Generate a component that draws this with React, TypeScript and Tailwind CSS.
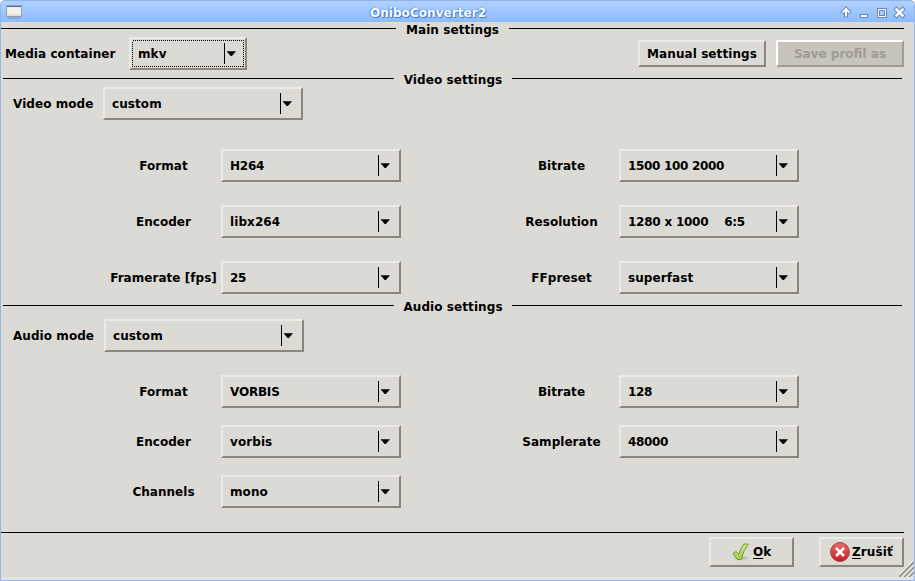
import React from "react";

const bevel = "border-2 border-t-[#ecebe8] border-l-[#ecebe8] border-r-[#8c857b] border-b-[#8c857b]";

function Combo({ value, width, focused = false, tracking = "tracking-[0.08px]" }: { value: string; width: string; focused?: boolean; tracking?: string }) {
  return (
    <div className={`flex h-[33px] shrink-0 ${width} ${bevel} ${focused ? "p-px" : ""}`}>
      <div className={`relative flex min-w-0 flex-1 items-center ${focused ? "pl-[6px] pr-[8px]" : "pl-[7px] pr-[9px]"}`}>
        {focused && (
          <svg className="absolute inset-0 h-full w-full" shapeRendering="crispEdges">
            <rect x="0.5" y="0.5" width="111" height="26" fill="none" stroke="#000" strokeDasharray="1 1" />
          </svg>
        )}
        <span className={`flex-1 whitespace-pre ${tracking}`}>{value}</span>
        <div className="h-[21px] w-px bg-black" />
        <svg className="ml-px h-[6px] w-[10px]" viewBox="0 0 10 6">
          <path d="M.5 .2H10L5.9 5H4.700Z" />
        </svg>
      </div>
    </div>
  );
}

function Section({ title, wide = false, left, right }: { title: string; wide?: boolean; left: string; right: string }) {
  return (
    <div className={`flex h-[17px] ${wide ? "pr-[10px]" : "pl-[2px] pr-3"}`}>
      <div className={`mt-[7px] h-px bg-black ${left}`} />
      <div className="flex-1 text-center leading-[18px] tracking-[0.08px]">{title}</div>
      <div className={`mt-[7px] h-px bg-black ${right}`} />
    </div>
  );
}

function Field({ label, value, tracking }: { label: string; value: string; tracking?: string }) {
  return (
    <div className="flex w-[295px] items-center">
      <div className="w-[115px] whitespace-nowrap text-center tracking-[0.04px]">{label}</div>
      <Combo value={value} width="w-[180px]" tracking={tracking} />
    </div>
  );
}

function FieldRow({ children, className }: { children: React.ReactNode; className: string }) {
  return <div className={`flex h-[33px] gap-[103px] pl-[105px] ${className}`}>{children}</div>;
}

function TitleBar() {
  return (
    <div className="flex h-[22px] items-center rounded-t-[5px] border-x border-t border-[#8fb4e7] bg-linear-to-b from-[#b1d1ff] to-[#8dbbff] pr-[8px] pl-[5px] text-white">
      <svg width="16" height="14" viewBox="0 0 16 14">
        <ellipse cx="8" cy="12.7" rx="7" ry="1.2" fill="#6f94bf" opacity=".6" />
        <rect x=".5" y=".5" width="15" height="11" fill="#f1f1ea" stroke="#92a1ad" />
        <path d="M1 1h14v1H1z" fill="#3979c9" />
        <path d="M1 9h14v2H1z" fill="#dedfd7" />
      </svg>
      <div className="flex-1 pt-[2px] pr-[6px] text-center tracking-[0.06px] [text-shadow:0_0_1px_#3978d0,1px_1px_1px_#3978d0,-1px_0_1px_#5f98e5]">OniboConverter2</div>
      <svg width="66" height="14" viewBox="0 0 66 14">
        <g fill="none" stroke="#6688b8" strokeWidth="4">
          <path d="M6 12.500V4M2 8L6 4l4 4" />
          <path d="M56.500 4.500l6 6M62.500 4.500l-6 6" strokeWidth="4.500" strokeLinecap="square" />
        </g>
        <g fill="none" stroke="#fff" strokeWidth="2">
          <path d="M6 11.500V4M2.500 7.500L6 4l3.500 3.500" />
          <path d="M56.500 4.500l6 6M62.500 4.500l-6 6" strokeWidth="2.500" strokeLinecap="square" />
        </g>
        <rect x="20.5" y="9.5" width="7" height="3" fill="#fff" stroke="#6688b8" />
        <g shapeRendering="crispEdges">
          <path d="M37 3h10v10H37z" fill="#6688b8" />
          <path d="M38 4h8v8h-8z" fill="#fff" />
          <path d="M39.500 5.500h5v5h-5z" fill="#a5caff" stroke="#6688b8" />
        </g>
      </svg>
    </div>
  );
}

function OkIcon() {
  return (
    <svg width="20" height="20" viewBox="0 0 20 20">
      <defs>
        <linearGradient id="tick" x1="0" y1="0" x2="0" y2="1"><stop stopColor="#d0ee80" /><stop offset="1" stopColor="#a4d044" /></linearGradient>
        <radialGradient id="shade"><stop stopColor="#aaa9a3" /><stop offset="1" stopColor="#dbdad5" /></radialGradient>
      </defs>
      <ellipse cx="10" cy="16" rx="9" ry="3" fill="url(#shade)" />
      <path d="M2 11.500L5.200 9.500l2.600 3Q10 5.500 13 2L17.200 2Q12.500 8 10 17.500H6.500Z" fill="url(#tick)" stroke="#73983a" strokeWidth="1" strokeLinejoin="round" />
    </svg>
  );
}

function CancelIcon() {
  return (
    <svg width="20" height="20" viewBox="0 0 20 20">
      <defs>
        <linearGradient id="stop" x1="0" y1="0" x2="0" y2="1"><stop stopColor="#ea6c6c" /><stop offset="1" stopColor="#c91824" /></linearGradient>
      </defs>
      <circle cx="10" cy="10" r="9.400" fill="url(#stop)" stroke="#a83a3f" />
      <path d="M7 7l6 6M13 7l-6 6" stroke="#fff" strokeWidth="2.700" strokeLinecap="square" />
    </svg>
  );
}

export default function App() {
  return (
    <div className="flex h-[581px] w-[915px] flex-col overflow-hidden bg-white font-['DejaVu_Sans',sans-serif] text-[12px] leading-[16px] font-bold text-black">
      <TitleBar />
      <div className="relative flex flex-1 flex-col border-x border-b border-[#92b6ed] bg-[#dbdad5]">
        <div className="-mt-px"><Section title="Main settings" wide left="w-[395px]" right="w-[395px]" /></div>
        <div className="mt-[-1px] flex h-[33px] items-center pr-[10px] pl-[4px]">
          <div className="w-[124px] whitespace-nowrap tracking-[0.06px]">Media container</div>
          <Combo value="mkv" width="w-[118px]" focused />
          <div className={`ml-auto flex h-[27px] w-[128px] items-center justify-center tracking-[0.08px] ${bevel}`}>Manual settings</div>
          <div className="ml-[10px] flex h-[27px] w-[128px] items-center justify-center border-2 border-t-white border-r-[#a29c94] border-b-[#a29c94] border-l-white bg-[#c8c4bc] text-[#a09b93]">Save profil as</div>
        </div>
        <div className="mt-px"><Section title="Video settings" left="w-[391px]" right="w-[390px]" /></div>
        <div className="-mt-px flex h-[33px] items-center pl-[12px]">
          <div className="w-[90px] whitespace-nowrap tracking-[0.06px]">Video mode</div>
          <Combo value="custom" width="w-[200px]" />
        </div>
        <FieldRow className="mt-[29px]"><Field label="Format" value="H264" tracking="tracking-[-0.25px]" /><Field label="Bitrate" value="1500 100 2000" tracking="tracking-[-0.32px]" /></FieldRow>
        <FieldRow className="mt-[23px]"><Field label="Encoder" value="libx264" /><Field label="Resolution" value="1280 x 1000    6:5" tracking="tracking-[-0.23px]" /></FieldRow>
        <FieldRow className="mt-[23px]"><Field label="Framerate [fps]" value="25" tracking="tracking-[-0.3px]" /><Field label="FFpreset" value="superfast" /></FieldRow>
        <div className="mt-[4px]"><Section title="Audio settings" left="w-[391px]" right="w-[390px]" /></div>
        <div className="mt-[4px] flex h-[33px] items-center pl-[12px]">
          <div className="w-[91px] whitespace-nowrap tracking-[0.06px]">Audio mode</div>
          <Combo value="custom" width="w-[200px]" />
        </div>
        <FieldRow className="mt-[23px]"><Field label="Format" value="VORBIS" tracking="tracking-[-0.2px]" /><Field label="Bitrate" value="128" tracking="tracking-[-0.3px]" /></FieldRow>
        <FieldRow className="mt-[17px]"><Field label="Encoder" value="vorbis" /><Field label="Samplerate" value="48000" tracking="tracking-[-0.33px]" /></FieldRow>
        <FieldRow className="mt-[17px]"><Field label="Channels" value="mono" /></FieldRow>
        <div className="mt-[24px] mr-[10px] h-px bg-black" />
        <div className="mt-[4px] flex h-[30px] justify-end gap-[25px] pr-[10px]">
          <button className={`flex w-[85px] items-center pl-[20px] ${bevel}`}><OkIcon /><span className="ml-[2px] whitespace-nowrap"><span className="underline decoration-1 underline-offset-2">O</span>k</span></button>
          <button className={`flex w-[85px] items-center pl-[9px] ${bevel}`}><CancelIcon /><span className="ml-[2px] whitespace-nowrap tracking-[0.1px]"><span className="underline decoration-1 underline-offset-2">Z</span>rušiť</span></button>
        </div>
        <div className="mt-auto h-[3px] shrink-0 bg-[#e5e4e1]" />
        <svg className="absolute right-0 bottom-[3px]" width="15" height="15" viewBox="0 0 15 15">
          <path d="M0 15L15 0M5 15L15 5M10 15l5-5" stroke="#8c857b" strokeWidth="1.500" />
          <path d="M-1 14L14-1M3.500 15L15 3.500M8.500 15L15 8.500" stroke="#f4f3f0" strokeWidth="1" />
        </svg>
      </div>
    </div>
  );
}
